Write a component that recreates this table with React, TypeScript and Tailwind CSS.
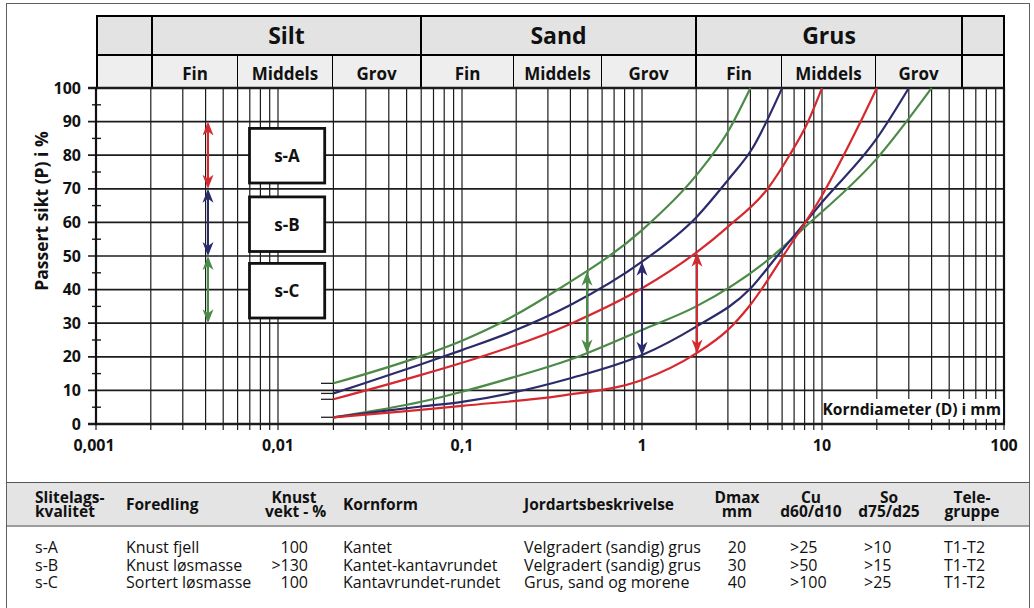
import clsx from 'clsx';

type Pt = [number, number];

// log axis: pixel x of each decade 0.001 .. 100 mm
const DECADES = [96, 278, 462, 642, 822, 1004];
const xOf = (d: number) => {
  const l = Math.log10(d) + 3;
  const i = Math.min(4, Math.max(0, Math.floor(l + 1e-9)));
  return DECADES[i] + (DECADES[i + 1] - DECADES[i]) * (l - i);
};
const yOf = (p: number) => 424 - p * 3.36;
const f = (n: number) => n.toFixed(1);

const GREEN = '#4b8a47';
const NAVY = '#2b2b6b';
const RED = '#d6282f';

// [grain size mm, passing %]
const CURVES: { color: string; pts: Pt[] }[] = [
  { color: GREEN, pts: [[0.02, 12.1], [0.06, 20.2], [0.1, 24.8], [0.19, 31.9], [0.35, 40.4], [1, 57.7], [2, 74], [3, 87], [4, 100]] },
  { color: GREEN, pts: [[0.02, 2], [0.06, 6.6], [0.1, 9.6], [0.19, 13.8], [0.4, 19.2], [1, 28], [2, 35], [5, 48.8], [8, 58.5], [20, 79], [40, 100]] },
  { color: NAVY, pts: [[0.02, 9.1], [0.06, 17.8], [0.1, 22], [0.19, 27.5], [0.4, 35.4], [1, 48.3], [2, 61.5], [3, 72.6], [4.1, 82], [6, 100]] },
  { color: NAVY, pts: [[0.02, 2], [0.06, 5.2], [0.1, 6.6], [0.4, 13.6], [1, 20.5], [2, 29], [4, 40.3], [5.6, 49.8], [10, 66], [20, 85], [30, 100]] },
  { color: RED, pts: [[0.02, 7.35], [0.06, 14.6], [0.1, 18.2], [0.4, 29.8], [1, 40.4], [2, 51], [3, 58.7], [5, 70.1], [6.6, 80], [8.2, 89], [10, 100]] },
  { color: RED, pts: [[0.02, 2], [0.05, 3.8], [0.1, 5.4], [0.35, 8.4], [1, 13.1], [2, 21], [3, 28], [4, 35.5], [6.4, 51.8], [10, 68], [15.8, 88.5], [20, 100]] },
];

// cubic hermite through the points (three-point tangents), written as bezier segments
function smooth(pts: Pt[]) {
  const xs = pts.map(([d]) => xOf(d));
  const ys = pts.map(([, v]) => yOf(v));
  const n = xs.length;
  const dx: number[] = [];
  const m: number[] = [];
  for (let i = 0; i < n - 1; i++) {
    dx[i] = xs[i + 1] - xs[i];
    m[i] = (ys[i + 1] - ys[i]) / dx[i];
  }
  const t: number[] = new Array(n).fill(0);
  for (let i = 1; i < n - 1; i++) {
    t[i] = (dx[i] * m[i - 1] + dx[i - 1] * m[i]) / (dx[i - 1] + dx[i]);
  }
  const end = (mm: number, tt: number) => {
    const v = 1.5 * mm - 0.5 * tt;
    return v * mm > 0 ? v : 0;
  };
  t[0] = end(m[0], t[1]);
  t[n - 1] = end(m[n - 2], t[n - 2]);
  let s = `M${f(xs[0])} ${f(ys[0])}`;
  for (let i = 0; i < n - 1; i++) {
    const h = dx[i] / 3;
    s += ` C${f(xs[i] + h)} ${f(ys[i] + t[i] * h)} ${f(xs[i + 1] - h)} ${f(ys[i + 1] - t[i + 1] * h)} ${f(xs[i + 1])} ${f(ys[i + 1])}`;
  }
  return s;
}

const V_LINES: number[] = [];
for (let e = -3; e <= 1; e++) for (let k = 1; k <= 9; k++) V_LINES.push(k * 10 ** e);
V_LINES.push(100);

const X_LABELS: [number, string][] = [
  [0.001, '0,001'],
  [0.01, '0,01'],
  [0.1, '0,1'],
  [1, '1'],
  [10, '10'],
  [100, '100'],
];

function Arrow({ x, top, bottom, color }: { x: number; top: number; bottom: number; color: string }) {
  const ya = yOf(top);
  const yb = yOf(bottom);
  return (
    <g fill={color}>
      <line x1={x} x2={x} y1={ya + 8} y2={yb - 8} stroke={color} strokeWidth={2} />
      <polygon points={`${x},${ya} ${x - 5.5},${ya + 14} ${x},${ya + 10} ${x + 5.5},${ya + 14}`} />
      <polygon points={`${x},${yb} ${x - 5.5},${yb - 14} ${x},${yb - 10} ${x + 5.5},${yb - 14}`} />
    </g>
  );
}

function LabelBox({ y, label }: { y: number; label: string }) {
  return (
    <g>
      <rect x={249.5} y={y + 1.4} width={75.2} height={54.6} fill="#fff" stroke="#111" strokeWidth={2.8} />
      <text x={287} y={y + 35} textAnchor="middle" fontSize={17} fontWeight={700} fill="#111">
        {label}
      </text>
    </g>
  );
}

const BANDS = [
  { label: '', w: 'w-[55px]' },
  { label: 'Silt', w: 'w-[269px]' },
  { label: 'Sand', w: 'w-[275px]' },
  { label: 'Grus', w: 'w-[266px]' },
  { label: '', w: 'w-[40px]' },
];

const SUBBANDS = [
  { label: '', w: 'w-[55px]', edge: true },
  { label: 'Fin', w: 'w-[85px]', edge: false },
  { label: 'Middels', w: 'w-[95px]', edge: false },
  { label: 'Grov', w: 'w-[89px]', edge: true },
  { label: 'Fin', w: 'w-[92px]', edge: false },
  { label: 'Middels', w: 'w-[88px]', edge: false },
  { label: 'Grov', w: 'w-[95px]', edge: true },
  { label: 'Fin', w: 'w-[85px]', edge: false },
  { label: 'Middels', w: 'w-[94px]', edge: false },
  { label: 'Grov', w: 'w-[87px]', edge: true },
  { label: '', w: 'w-[40px]', edge: false },
];

const COLS = [
  { w: 'w-[91px]', head: 'text-left', cell: 'text-left', title: ['Slitelags-', 'kvalitet'] },
  { w: 'w-[139px]', head: 'text-left', cell: 'text-left', title: ['Foredling'] },
  { w: 'w-[78px]', head: 'text-center pr-[20px]', cell: 'text-right pr-[35px]', title: ['Knust', 'vekt - %'] },
  { w: 'w-[181px]', head: 'text-left', cell: 'text-left', title: ['Kornform'] },
  { w: 'w-[179px]', head: 'text-left', cell: 'text-left', title: ['Jordartsbeskrivelse'] },
  { w: 'w-[68px]', head: 'text-center', cell: 'text-center', title: ['Dmax', 'mm'] },
  { w: 'w-[80px]', head: 'text-center', cell: 'text-left pl-[19px]', title: ['Cu', 'd60/d10'] },
  { w: 'w-[76px]', head: 'text-center', cell: 'text-left pl-[13px]', title: ['So', 'd75/d25'] },
  { w: 'w-[90px]', head: 'text-center', cell: 'text-left pl-[17px]', title: ['Tele-', 'gruppe'] },
];

const ROWS = [
  ['s-A', 'Knust fjell', '100', 'Kantet', 'Velgradert (sandig) grus', '20', '>25', '>10', 'T1-T2'],
  ['s-B', 'Knust løsmasse', '>130', 'Kantet-kantavrundet', 'Velgradert (sandig) grus', '30', '>50', '>15', 'T1-T2'],
  ['s-C', 'Sortert løsmasse', '100', 'Kantavrundet-rundet', 'Grus, sand og morene', '40', '>100', '>25', 'T1-T2'],
];

export default function App() {
  return (
    <div className="h-[608px] w-[1034px] overflow-hidden bg-white pl-[6px] pt-[3px] font-['Open_Sans',sans-serif] text-[#111]">
      <div className="h-[605px] w-[1024px] border border-b-0 border-[#5f5f5f]">
        {/* grading chart */}
        <div className="h-[478px] pt-[11px]">
          <div className="ml-[89px] w-[909px] border-x-2 border-t-2 border-black">
            <div className="flex h-[39px] border-b-2 border-black bg-[#e3e3e3]">
              {BANDS.map((b, i) => (
                <div
                  key={i}
                  className={clsx(
                    'flex items-center justify-center text-[23px] font-bold',
                    b.w,
                    i < BANDS.length - 1 && 'border-r-2 border-black',
                  )}
                >
                  {b.label}
                </div>
              ))}
            </div>
            <div className="flex h-[31px] bg-[#eeeeee]">
              {SUBBANDS.map((b, i) => (
                <div
                  key={i}
                  className={clsx(
                    'flex items-center justify-center pt-[4px] text-[17px] font-bold',
                    b.w,
                    i < SUBBANDS.length - 1 && (b.edge ? 'border-r-2 border-black' : 'border-r border-black'),
                  )}
                >
                  {b.label}
                </div>
              ))}
            </div>
          </div>

          <svg viewBox="7 87 1022 395" width={1022} height={395} className="block overflow-visible">
            {/* vertical grid */}
            {V_LINES.map((d, i) => (
              <line key={i} x1={f(xOf(d))} x2={f(xOf(d))} y1={88} y2={430} stroke="#1c1c1c" strokeWidth={1.2} />
            ))}
            {/* horizontal grid */}
            {Array.from({ length: 11 }, (_, i) => (
              <line key={i} x1={88} x2={1005} y1={yOf(i * 10)} y2={yOf(i * 10)} stroke="#1c1c1c" strokeWidth={i === 0 || i === 10 ? 2.6 : 1.7} />
            ))}
            {Array.from({ length: 10 }, (_, i) => (
              <line key={i} x1={92} x2={101} y1={yOf(i * 10 + 5)} y2={yOf(i * 10 + 5)} stroke="#1c1c1c" strokeWidth={1.4} />
            ))}
            <line x1={96} x2={96} y1={87} y2={425} stroke="#111" strokeWidth={2.2} />
            <line x1={1004} x2={1004} y1={87} y2={425} stroke="#111" strokeWidth={2.2} />

            {/* y axis */}
            {Array.from({ length: 11 }, (_, i) => (
              <text key={i} x={81} y={yOf(i * 10) + 5.5} textAnchor="end" fontSize={16} fontWeight={700} fill="#111">
                {i * 10}
              </text>
            ))}
            <text
              x={48}
              y={211}
              transform="rotate(-90 48 211)"
              textAnchor="middle"
              fontSize={17.5}
              fontWeight={700}
              fill="#111"
            >
              Passert sikt (P) i %
            </text>

            {/* x axis */}
            {X_LABELS.map(([d, label]) => (
              <text key={label} x={d === 0.001 ? 94 : xOf(d)} y={451} textAnchor="middle" fontSize={16} fontWeight={700} fill="#111">
                {label}
              </text>
            ))}
            <rect x={824} y={399} width={179} height={20} fill="#fff" />
            <text x={1001} y={414.5} textAnchor="end" fontSize={15.6} fontWeight={700} fill="#111">
              Korndiameter (D) i mm
            </text>

            <LabelBox y={127} label="s-A" />
            <LabelBox y={195.5} label="s-B" />
            <LabelBox y={262} label="s-C" />

            {/* start ticks */}
            {[12.1, 9.1, 7.35, 2].map((p) => (
              <line key={p} x1={321} x2={334} y1={yOf(p)} y2={yOf(p)} stroke="#222" strokeWidth={1.3} />
            ))}

            {CURVES.map((c, i) => (
              <path key={i} d={smooth(c.pts)} fill="none" stroke={c.color} strokeWidth={2.2} />
            ))}

            <Arrow x={208} top={90} bottom={70} color={RED} />
            <Arrow x={208} top={70} bottom={50} color={NAVY} />
            <Arrow x={208} top={50} bottom={30} color={GREEN} />
            <Arrow x={587} top={45.3} bottom={21} color={GREEN} />
            <Arrow x={642} top={48.3} bottom={20.3} color={NAVY} />
            <Arrow x={697} top={51} bottom={21} color={RED} />
          </svg>
        </div>

        {/* quality table */}
        <div className="border-t-[1.5px] border-[#555]">
          <div className="flex h-[44px] items-center border-b-2 border-[#9c9c9c] bg-[#e4e4e4] pl-[28px] text-[15.5px] font-bold leading-[14px]">
            {COLS.map((c, i) => (
              <div key={i} className={clsx('shrink-0 whitespace-nowrap', c.w, c.head)}>
                {c.title.map((t, j) => (
                  <div key={j}>{t}</div>
                ))}
              </div>
            ))}
          </div>
          <div className="pl-[28px] pt-[12px] text-[16px] leading-[17.5px]">
            {ROWS.map((row, r) => (
              <div key={r} className="flex">
                {row.map((v, i) => (
                  <div key={i} className={clsx('shrink-0 whitespace-nowrap', COLS[i].w, COLS[i].cell)}>
                    {v}
                  </div>
                ))}
              </div>
            ))}
          </div>
        </div>
      </div>
    </div>
  );
}
